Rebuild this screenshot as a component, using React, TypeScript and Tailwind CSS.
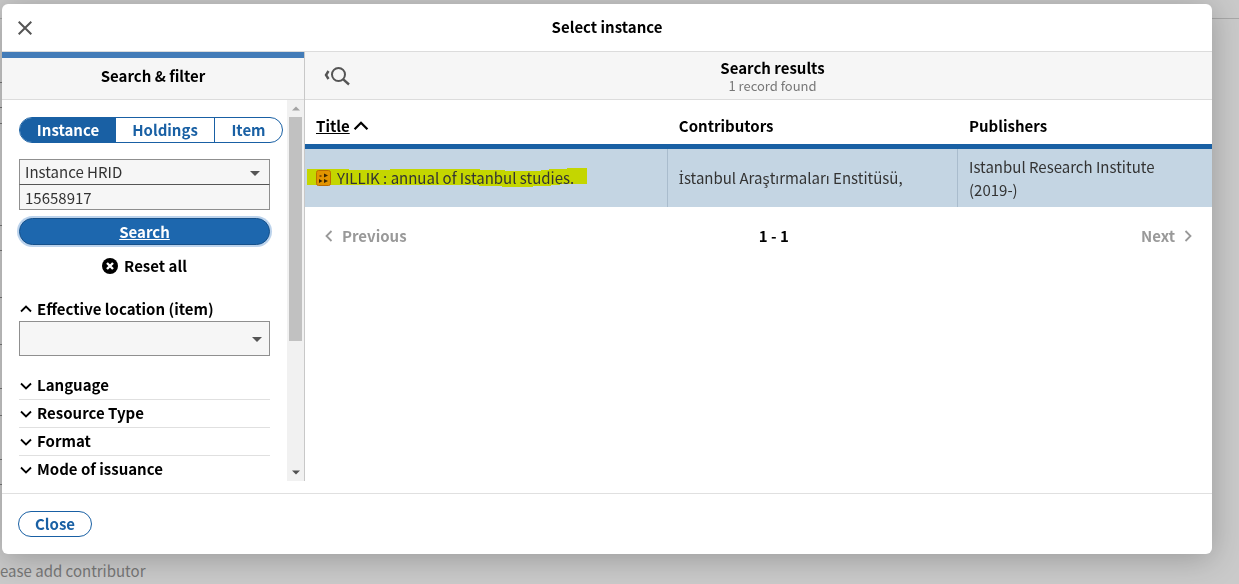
import type { ReactNode } from 'react';

const filters = ['Language', 'Resource Type', 'Format', 'Mode of issuance'];

// Heights of the form rows that peek out left of the dialog
const formRows = [64, 25, 16, 102, 25, 47, 47, 44, 27, 44, 25];

function Chevron({ dir, className = '' }: { dir: 'up' | 'down' | 'left' | 'right'; className?: string }) {
  const d = {
    up: 'M2 9.5 7 4.5 12 9.5',
    down: 'M2 4.5 7 9.5 12 4.5',
    left: 'M9.5 2 4.5 7 9.5 12',
    right: 'M4.5 2 9.5 7 4.5 12',
  }[dir];
  return (
    <svg viewBox="0 0 14 14" className={className} fill="none" stroke="currentColor" strokeWidth="1.8" aria-hidden="true">
      <path d={d} />
    </svg>
  );
}

function Caret({ className = '' }: { className?: string }) {
  return (
    <svg viewBox="0 0 10 5" className={`pointer-events-none h-[5px] ${className}`} fill="currentColor" aria-hidden="true">
      <path d="M0 0h10L5 5z" />
    </svg>
  );
}

function PaneHeader({ children, className = '' }: { children: ReactNode; className?: string }) {
  return <header className={`h-12 shrink-0 border-b border-[#dcdcdc] bg-[#f6f6f6] ${className}`}>{children}</header>;
}

// Record form that stays visible around the edges of the dialog
function FormBehind() {
  return (
    <div className="flex min-h-screen flex-col bg-[#cacaca]">
      <div className="h-[19px] border-b border-[#a8a8a8]" />
      <div className="w-1 flex-1" aria-hidden="true">
        {formRows.map((height, i) => (
          <div key={i} className="border-b border-[#777]" style={{ height }} />
        ))}
      </div>
      <p className="h-6 text-[15px] leading-[22px] text-[#777]">ease add contributor</p>
    </div>
  );
}

function SearchPane() {
  return (
    <section className="mb-3 flex w-[303px] shrink-0 flex-col border-r border-[#c8c8c8]">
      <PaneHeader className="border-t-[6px] border-t-[#437cb8]">
        <h2 className="text-center text-[15px] leading-[36px] font-bold">Search &amp; filter</h2>
      </PaneHeader>
      <div className="flex min-h-0 flex-1">
        <form className="min-w-0 flex-1 overflow-hidden px-[17px] pt-[17px]" onSubmit={(e) => e.preventDefault()}>
          <div className="-mr-[13px] flex h-[26px] overflow-hidden rounded-full border border-[#1960a4] text-[15px] leading-6 font-bold text-[#1960a4]">
            <button type="button" className="w-24 bg-[#1960a4] text-white">Instance</button>
            <button type="button" className="flex-1 border-r border-[#1960a4]">Holdings</button>
            <button type="button" className="w-[67px]">Item</button>
          </div>
          <div className="relative mt-4">
            <select aria-label="Search by" className="block h-[26px] w-full appearance-none border border-[#8f8f8f] border-b-[#555] bg-[#f6f6f6] px-[5px] text-[15px] leading-6 text-[#333]">
              <option>Instance HRID</option>
            </select>
            <Caret className="absolute top-3 right-2.5 w-2.5 text-[#555]" />
          </div>
          <input aria-label="Search term" defaultValue="15658917" className="block h-[25px] w-full border border-t-0 border-[#8f8f8f] bg-[#f6f6f6] px-[5px] text-[15px] text-[#333]" />
          <button type="submit" className="mt-2 block h-[27px] w-full rounded-full border border-[#15508a] bg-[#1d67ae] text-[15px] leading-[25px] font-bold text-white underline shadow-[0_0_0_2px_#bcd3ec]">Search</button>
          <button type="button" className="mx-auto mt-2 flex h-[26px] items-center gap-1.5 text-[15px] font-bold">
            <svg viewBox="0 0 16 16" className="size-4" aria-hidden="true">
              <circle cx="8" cy="8" r="8" />
              <path d="M5 5l6 6M11 5l-6 6" stroke="#fff" strokeWidth="2.4" />
            </svg>
            Reset all
          </button>
          <button type="button" className="mt-[18px] flex h-6 items-center gap-1 text-[15px] font-bold">
            <Chevron dir="up" className="size-3.5" />
            Effective location (item)
          </button>
          <div className="relative mb-4">
            <select aria-label="Effective location (item)" className="block h-[35px] w-full appearance-none border border-[#8f8f8f] bg-[#f6f6f6]" />
            <Caret className="absolute top-4 right-2 w-2.5 text-[#555]" />
          </div>
          {filters.map((name) => (
            <div key={name} className="border-b border-[#e0e0e0]">
              <button type="button" className="flex h-[27px] w-full items-center gap-1 text-[15px] font-bold">
                <Chevron dir="down" className="size-3.5" />
                {name}
              </button>
            </div>
          ))}
        </form>
        <div className="flex w-[17px] flex-col items-center bg-[#f1f1f1]" aria-hidden="true">
          <Caret className="my-1.5 w-2 rotate-180 text-[#a3a3a3]" />
          <div className="h-56 w-[13px] bg-[#c1c1c1]" />
          <Caret className="mt-auto mb-1.5 w-2 text-[#505050]" />
        </div>
      </div>
    </section>
  );
}

function ResultsPane() {
  return (
    <section className="flex min-w-0 flex-1 flex-col">
      <PaneHeader className="flex items-center px-[18px]">
        <button type="button" aria-label="Hide search pane" className="text-[#555]">
          <svg viewBox="0 0 28 20" className="h-5 w-7" fill="none" stroke="currentColor" aria-hidden="true">
            <path d="M5.500 5 3 9l2.500 4" strokeWidth="2.400" />
            <circle cx="15.500" cy="8.500" r="6.500" strokeWidth="2" />
            <path d="m20 13.200 6 5.300" strokeWidth="2.400" />
          </svg>
        </button>
        <div className="flex-1 text-center">
          <h2 className="text-[15px] leading-5 font-bold">Search results</h2>
          <p className="text-[13px] leading-4 text-[#777]">1 record found</p>
        </div>
      </PaneHeader>
      <table className="w-full table-fixed border-separate border-spacing-0 text-left text-[15px]">
        <colgroup>
          <col className="w-[40%]" />
          <col className="w-[32%]" />
          <col />
        </colgroup>
        <thead>
          <tr className="h-[49px]">
            <th className="border-b-[5px] border-[#1960a4] pt-2 pl-[11px]">
              <button type="button" className="flex items-center gap-0.5">
                <span className="underline">Title</span>
                <Chevron dir="up" className="size-[18px]" />
              </button>
            </th>
            <th className="border-b-[5px] border-[#1960a4] pt-2 pl-[11px]">Contributors</th>
            <th className="border-b-[5px] border-[#1960a4] pt-2 pl-[11px]">Publishers</th>
          </tr>
        </thead>
        <tbody className="bg-[#c4d5e3] text-[#333]">
          <tr className="h-[58px]">
            <td className="relative border-r border-[#a9bccd] pl-[11px]">
              <svg viewBox="0 0 281 20" className="absolute top-[18px] left-0.5 h-5 w-[281px]" fill="#c4d600" aria-hidden="true">
                <path d="M0 2h42v1h41V2h90v1h25v1h36V3h8V2h18V1h20v16h-27v1h-9v1h-18v1h-31v-1h-23v-1H0z" />
              </svg>
              <a href="#record" className="relative flex items-center gap-1.5">
                <svg viewBox="0 0 15 16" className="h-4 w-[15px]" aria-hidden="true">
                  <rect x=".5" y=".5" width="14" height="15" rx="2" fill="#e29400" stroke="#bd6d00" />
                  <path d="M8 3.500l4 2-4 2zM3 9l3.500 2L3 13zM8 9l4 2-4 2z" fill="#3a2500" />
                  <path d="M3.500 5h2v2h-2z" fill="#8a5200" />
                </svg>
                YILLIK : annual of Istanbul studies.
              </a>
            </td>
            <td className="border-r border-[#a9bccd] pl-[11px]">
              <span className="font-['Noto_Sans',sans-serif]">İ</span>stanbul Araştırmaları Enstitüsü,
            </td>
            <td className="pr-10 pl-[11px] leading-[23px]">Istanbul Research Institute (2019-)</td>
          </tr>
        </tbody>
      </table>
      <nav className="flex h-[58px] items-center justify-between px-[17px] text-[15px] font-bold text-[#999]" aria-label="Pages">
        <button type="button" className="flex items-center gap-1.5" disabled>
          <Chevron dir="left" className="size-3.5" />
          Previous
        </button>
        <span className="text-black">1 - 1</span>
        <button type="button" className="flex items-center gap-1.5" disabled>
          Next
          <Chevron dir="right" className="size-3.5" />
        </button>
      </nav>
    </section>
  );
}

export default function App() {
  return (
    <div className="font-['Noto_Sans_CJK_SC','Noto_Sans',sans-serif] text-black">
      <FormBehind />
      <div className="fixed inset-0 flex pt-1 pr-[27px] pb-[30px] pl-0.5">
        <div role="dialog" aria-labelledby="dialog-title" className="flex min-w-0 flex-1 flex-col overflow-hidden rounded-md bg-white shadow-[0_4px_32px_rgba(0,0,0,0.25)]">
          <header className="flex h-12 shrink-0 items-center border-b border-[#dcdcdc] px-4">
            <button type="button" aria-label="Dismiss" className="text-[#555]">
              <svg viewBox="0 0 14 14" className="size-3.5" stroke="currentColor" strokeWidth="2" aria-hidden="true">
                <path d="M.7.7l12.600 12.600M13.300.7.7 13.300" />
              </svg>
            </button>
            <h1 id="dialog-title" className="flex-1 pr-3.5 text-center text-[15px] font-bold">Select instance</h1>
          </header>
          <div className="flex min-h-0 flex-1">
            <SearchPane />
            <ResultsPane />
          </div>
          <footer className="flex h-[61px] shrink-0 items-center border-t border-[#e0e0e0] px-4">
            <button type="button" className="h-[26px] rounded-full border border-[#1960a4] px-4 text-[15px] leading-6 font-bold text-[#1960a4]">Close</button>
          </footer>
        </div>
      </div>
    </div>
  );
}
